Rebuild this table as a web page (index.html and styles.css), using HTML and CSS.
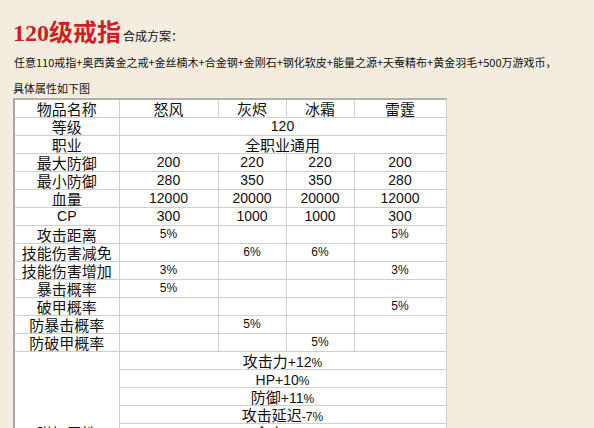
FILE: index.html
```html
<!DOCTYPE html>
<html lang="zh">
<head>
<meta charset="utf-8">
<link rel="stylesheet" href="styles.css">
</head>
<body>
<div class="page">
  <div class="title-line"><span class="title">120级戒指</span><span class="subtitle">合成方案：</span></div>
  <p class="recipe">任意110戒指+奥西黄金之戒+金丝楠木+合金钢+金刚石+钢化软皮+能量之源+天蚕精布+黄金羽毛+500万游戏币，</p>
  <p class="note">具体属性如下图</p>
  <table class="attr">
    <colgroup>
      <col class="c1"><col class="c2"><col class="c3"><col class="c4"><col class="c5">
    </colgroup>
    <tr class="head"><td>物品名称</td><td>怒风</td><td>灰烬</td><td>冰霜</td><td>雷霆</td></tr>
    <tr><td>等级</td><td colspan="4" class="num">120</td></tr>
    <tr><td>职业</td><td colspan="4">全职业通用</td></tr>
    <tr><td>最大防御</td><td class="num">200</td><td class="num">220</td><td class="num">220</td><td class="num">200</td></tr>
    <tr><td>最小防御</td><td class="num">280</td><td class="num">350</td><td class="num">350</td><td class="num">280</td></tr>
    <tr><td>血量</td><td class="num">12000</td><td class="num">20000</td><td class="num">20000</td><td class="num">12000</td></tr>
    <tr><td class="num">CP</td><td class="num">300</td><td class="num">1000</td><td class="num">1000</td><td class="num">300</td></tr>
    <tr><td>攻击距离</td><td class="pct">5%</td><td></td><td></td><td class="pct">5%</td></tr>
    <tr><td>技能伤害减免</td><td></td><td class="pct">6%</td><td class="pct">6%</td><td></td></tr>
    <tr><td>技能伤害增加</td><td class="pct">3%</td><td></td><td></td><td class="pct">3%</td></tr>
    <tr><td>暴击概率</td><td class="pct">5%</td><td></td><td></td><td></td></tr>
    <tr><td>破甲概率</td><td></td><td></td><td></td><td class="pct">5%</td></tr>
    <tr><td>防暴击概率</td><td></td><td class="pct">5%</td><td></td><td></td></tr>
    <tr><td>防破甲概率</td><td></td><td></td><td class="pct">5%</td><td></td></tr>
    <tr><td rowspan="9" class="set">附加属性</td><td colspan="4">攻击力<span class="n">+12</span><span class="p">%</span></td></tr>
    <tr><td colspan="4"><span class="n">HP+10</span><span class="p">%</span></td></tr>
    <tr><td colspan="4">防御<span class="n">+11</span><span class="p">%</span></td></tr>
    <tr><td colspan="4">攻击延迟<span class="p">-7%</span></td></tr>
    <tr><td colspan="4">命中<span class="n">+5</span><span class="p">%</span></td></tr>
    <tr><td colspan="4">&nbsp;</td></tr>
    <tr><td colspan="4">&nbsp;</td></tr>
    <tr><td colspan="4">&nbsp;</td></tr>
    <tr><td colspan="4">&nbsp;</td></tr>
  </table>
</div>
</body>
</html>
```

FILE: styles.css
```css
html, body {
  margin: 0;
  padding: 0;
  height: 428px;
  overflow: hidden;
}
body {
  background: #f4eddf;
  color: #111;
  font-family: "Noto Sans CJK SC", "Noto Sans", sans-serif;
}
.page {
  padding: 18px 0 0 13px;
}
.title-line {
  height: 30px;
  line-height: 30px;
  white-space: nowrap;
}
.title {
  font-family: "Liberation Serif", "Noto Sans CJK SC", serif;
  font-size: 24px;
  font-weight: bold;
  color: #cc1f24;
}
.subtitle {
  font-size: 12px;
  margin-left: 2px;
}
.recipe {
  margin: 6px 0 0 1px;
  font-size: 11px;
  line-height: 16px;
  white-space: nowrap;
}
.note {
  margin: 10px 0 0 0;
  font-size: 11px;
  line-height: 16px;
}
.attr {
  margin-top: 2px;
  border-collapse: collapse;
  table-layout: fixed;
  width: 432px;
  background: #fff;
  border-left: 2px solid #a6a6a6;
  border-top: 2px solid #b0b0b0;
  border-right: 1px solid #b8b8b8;
}
.c1 { width: 105px; }
.c2 { width: 99px; }
.c3 { width: 68px; }
.c4 { width: 68px; }
.c5 { width: 92px; }
.attr tr {
  height: 18px;
}
.attr td {
  border: 1px solid #cfcfcf;
  padding: 0;
  height: 17px;
  line-height: 17px;
  font-size: 15px;
  text-align: center;
  white-space: nowrap;
  overflow: hidden;
  vertical-align: middle;
}
.attr tr.head {
  height: 17px;
}
.attr .head td {
  height: 17px;
}
.attr td.num {
  font-family: "Liberation Sans", sans-serif;
  font-size: 14px;
}
.attr td.pct {
  font-family: "Liberation Sans", sans-serif;
  font-size: 12px;
}
.attr .n {
  font-family: "Liberation Sans", sans-serif;
  font-size: 14px;
  line-height: 1;
}
.attr .p {
  font-family: "Liberation Sans", sans-serif;
  font-size: 12px;
  line-height: 1;
}
```
